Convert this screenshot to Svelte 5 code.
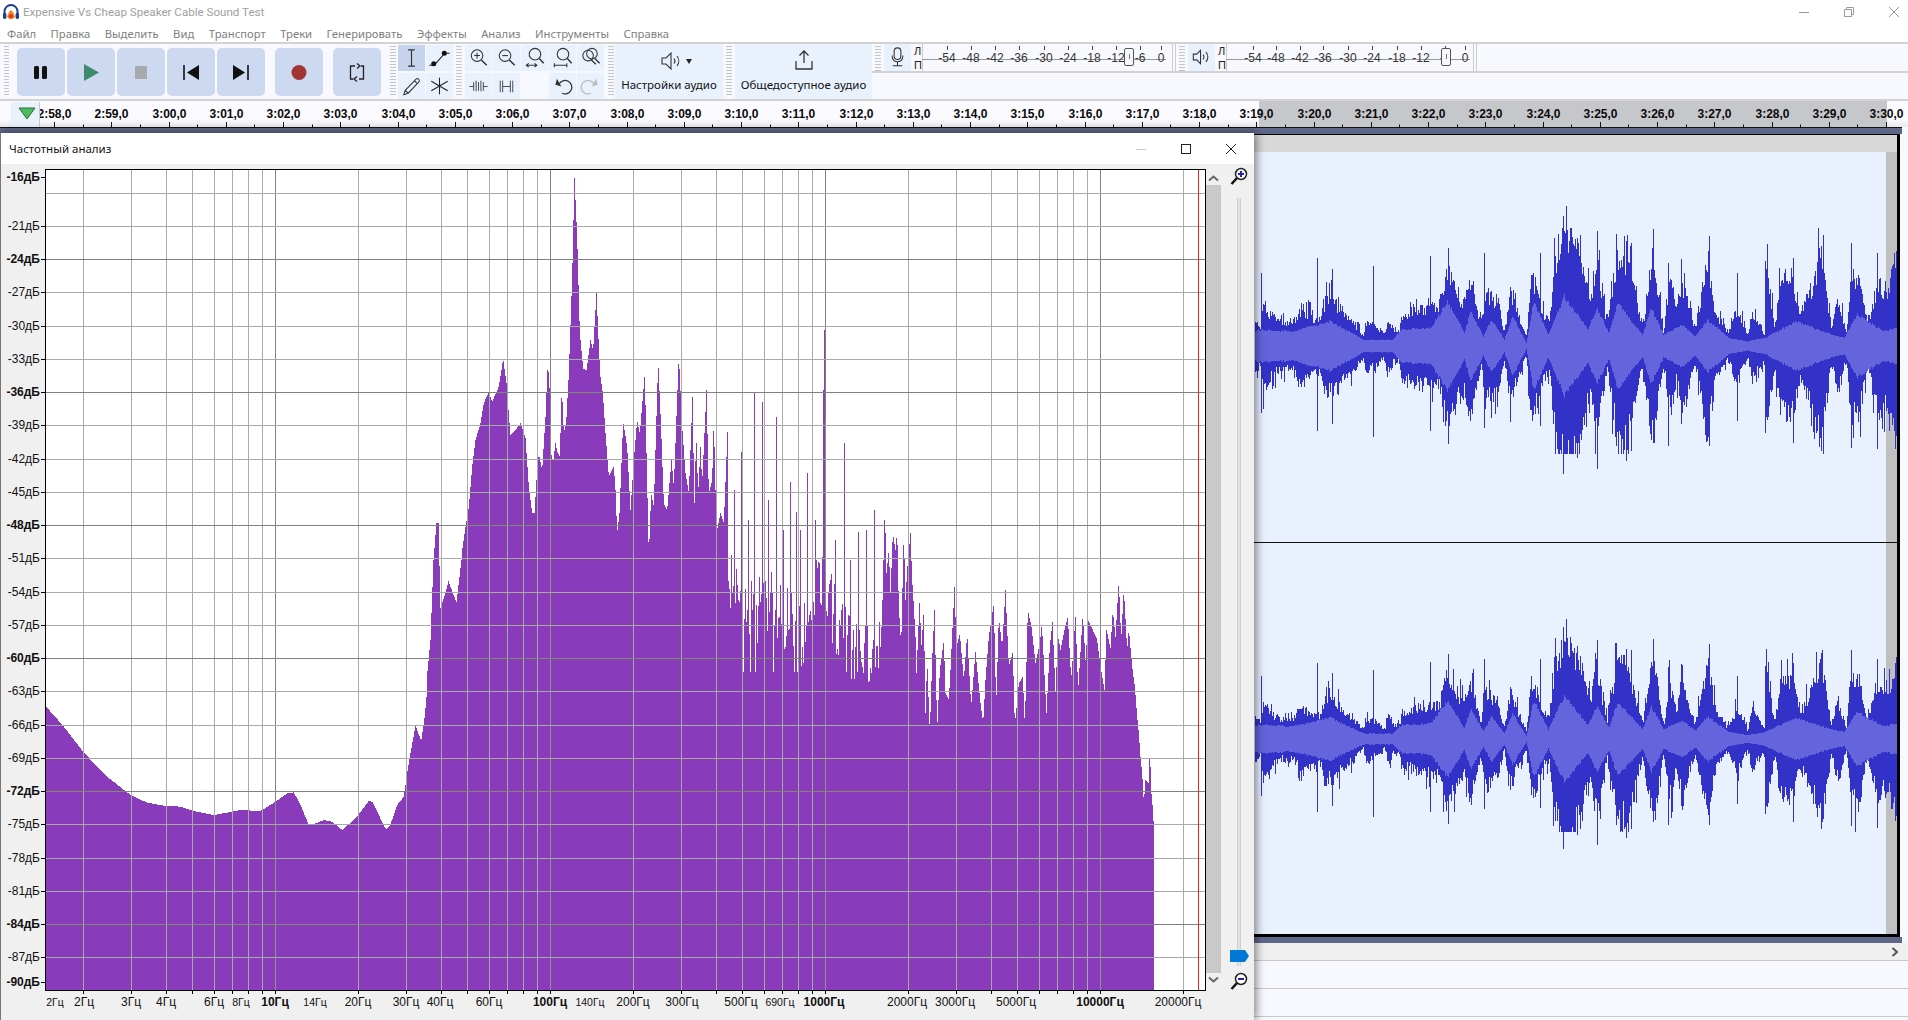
<script>
  const menus = ["Файл", "Правка", "Выделить", "Вид", "Транспорт", "Треки", "Генерировать", "Эффекты", "Анализ", "Инструменты", "Справка"];

  function rng(seed) {
    let a = seed;
    return () => {
      a = (a + 0x6d2b79f5) | 0;
      let t = Math.imul(a ^ (a >>> 15), 1 | a);
      t = (t + Math.imul(t ^ (t >>> 7), 61 | t)) ^ t;
      return ((t ^ (t >>> 14)) >>> 0) / 4294967296;
    };
  }

  function interp(pts, x) {
    if (x <= pts[0][0]) return pts[0][1];
    for (let i = 1; i < pts.length; i++) {
      if (x <= pts[i][0]) {
        const [x0, y0] = pts[i - 1];
        const [x1, y1] = pts[i];
        return y0 + ((y1 - y0) * (x - x0)) / (x1 - x0 || 1);
      }
    }
    return pts[pts.length - 1][1];
  }

  // ruler
  const rulerTicks = [];
  for (let i = 0; i <= 32; i++) {
    const s = 178 + i;
    const x = 54 + i * 57.25;
    const label = `${Math.floor(s / 60)}:${String(s % 60).padStart(2, "0")},0`;
    rulerTicks.push({ x: Math.round(x) + 0.5, half: Math.round(x + 28.6) + 0.5, label });
  }

  // meters
  const dbLabels = [-54, -48, -42, -36, -30, -24, -18, -12, -6, 0];
  const inMeter = { x0: 911, w: 259, div: 922, end: 1166, thumb: 1129, xs: [947, 971, 995, 1019, 1044, 1068, 1092, 1116, 1140, 1161] };
  const outMeter = { x0: 1215, w: 256, div: 1226, end: 1470, thumb: 1446, xs: [1253, 1276, 1300, 1323, 1348, 1372, 1397, 1421, 1445, 1465] };

  // spectrum: top edge traced per section from the plot
  const fromZoom = (ox, oy, s, list) => list.map(([x, y]) => [ox + x / s, oy + y / s]);
  const lowEnd = fromZoom(30, 680, 3, [[47,80],[100,140],[160,218],[230,290],[300,345],[350,368],[400,377],[450,380],[490,393],[550,405],[600,396],[630,390],[690,393],[735,365],[770,340],[790,337],[810,375],[835,435],[850,432],[880,420],[905,425],[935,450],[975,415],[1015,363],[1025,365],[1045,405],[1060,438],[1068,447],[1080,433],[1100,375],[1120,350],[1130,280],[1140,220],[1155,137],[1172,183],[1182,115],[1190,30]]);
  const risePts = [[426,681],[430,640],[433,560],[436,523],[438,523],[440,608],[444,596],[448,581],[452,592],[456,602],[461,560]];
  const midEnd = fromZoom(400, 160, 3, [[185,1170],[195,1100],[205,1040],[215,920],[225,840],[240,790],[250,730],[265,695],[275,725],[295,680],[308,597],[318,670],[324,750],[330,825],[345,810],[360,790],[375,835],[385,980],[395,1060],[402,1060],[408,960],[415,880],[425,930],[435,770],[442,605],[448,700],[452,880],[458,905],[465,850],[472,880],[478,890],[484,680],[490,820],[497,790],[505,640],[515,350],[522,55],[530,230],[538,520],[548,625],[558,630],[570,540],[578,570],[588,400],[595,560],[600,650],[607,700],[615,820],[625,950],[640,920],[645,990],[650,1120],[657,1060],[668,785],[680,860],[690,1050],[700,900],[710,780],[718,820],[733,640],[738,880],[745,1190],[752,1000],[760,1040],[773,600],[782,810],[790,1030],[800,1050],[813,900],[820,980],[835,585],[845,800],[855,940],[865,1000],[877,685],[881,1070],[887,820],[893,1000],[900,860],[905,970],[918,690],[925,1000],[935,960],[940,775],[948,1120],[960,1060],[970,1090],[982,790]]);
  const highEnd = fromZoom(880, 440, 3, [[0,620],[5,520],[13,200],[18,400],[25,330],[30,460],[37,280],[45,330],[50,270],[55,500],[62,620],[70,270],[75,480],[80,390],[90,280],[95,420],[100,500],[105,590],[108,700],[118,465],[122,630],[130,510],[135,820],[140,660],[148,880],[155,660],[162,510],[170,870],[178,690],[190,600],[195,760],[205,780],[210,690],[222,440],[228,620],[238,580],[250,720],[260,580],[272,800],[285,635],[300,790],[308,850],[315,720],[325,590],[340,490],[347,800],[355,530],[365,620],[375,450],[385,680],[397,635],[403,855],[415,730],[427,710],[433,860],[442,510],[453,560],[465,670],[478,610],[484,550],[498,820],[508,620],[516,545],[525,755],[532,585],[540,630],[552,570],[562,530],[572,720],[585,530],[593,750],[607,520],[615,660],[623,540],[637,570],[650,600],[660,680],[673,755],[677,565],[690,625],[697,510],[705,590],[715,420],[722,600],[730,445],[740,630],[745,565],[755,680],[763,740],[770,830],[775,880],[780,950],[785,1000],[790,1090],[795,1020],[805,1030],[808,920],[812,1040],[815,1105],[818,1075],[820,1210],[822,1260]]);
  const upperPts = [...lowEnd, ...risePts, ...midEnd];
  const midBase = [[728,570],[750,600],[770,595],[790,610],[805,625],[820,570],[840,620],[860,645],[880,640]];
  const midSpikes = [[741,452],[754,392],[762,402],[776,417],[790,482],[796,512],[807,473],[812,480],[824,330],[823,390],[825,420],[844,443],[858,532],[734,490],[748,520],[768,500],[783,530],[800,530],[815,520],[835,540],[850,560],[866,530],[874,510]];

  const plot = { left: 45, right: 1205, top: 169, bottom: 990 };
  const r1 = rng(11);
  let specPath = `M${plot.left} ${plot.bottom}`;
  for (let x = plot.left; x < 1154; x++) {
    let y;
    if (x < 728) y = interp(upperPts, x);
    else if (x < 880) {
      const b = interp(midBase, x);
      y = b + (r1() - 0.35) * 70;
      if (r1() < 0.08) y = Math.max(y, 672);
      const s = midSpikes.find((p) => p[0] === x);
      if (s) y = s[1];
    } else y = interp(highEnd, x);
    specPath += `V${y.toFixed(0)}H${x + 1}`;
  }
  specPath += `V${plot.bottom}Z`;

  const dbY = (db) => 226 + (-21 - db) * 11.08;
  const hLines = [];
  for (let db = -18; db >= -87; db -= 3) hLines.push({ y: Math.round(dbY(db)) + 0.5, dark: db % 12 === 0 });
  const dbAxis = [{ t: "-16дБ", y: 177, b: true }, { t: "-90дБ", y: 982, b: true }];
  for (let db = -21; db >= -87; db -= 3) dbAxis.push({ t: `${db}дБ`, y: Math.round(dbY(db)), b: db % 12 === 0 });

  const fx = (f) => Math.round(275 * Math.log10(f)) + 0.5;
  const freqs = [];
  for (const m of [1, 10, 100, 1000]) for (let k = m === 1 ? 2 : 1; k < 10; k++) freqs.push(k * m);
  freqs.push(10000, 20000);
  const vLines = freqs.map((f) => ({ x: fx(f), dark: f === 10 || f === 100 || f === 1000 || f === 10000 }));
  const freqAxis = [
    ["2Гц", 55, "s"], ["2Гц", 84], ["3Гц", 131], ["4Гц", 166], ["6Гц", 214], ["8Гц", 241, "s"], ["10Гц", 275, "b"],
    ["14Гц", 315, "s"], ["20Гц", 358], ["30Гц", 406], ["40Гц", 440], ["60Гц", 489], ["100Гц", 550, "b"], ["140Гц", 590, "s"],
    ["200Гц", 633], ["300Гц", 682], ["500Гц", 741], ["690Гц", 780, "s"], ["1000Гц", 824, "b"], ["2000Гц", 907],
    ["3000Гц", 955], ["5000Гц", 1016], ["10000Гц", 1100, "b"], ["20000Гц", 1178]
  ];

  // waveform envelopes, traced in zoomed units around the channel centre
  const peakEnv = [[12,410],[25,420],[30,350],[50,390],[70,410],[100,410],[125,370],[150,400],[165,400],[180,340],[200,350],[230,390],[270,445],[275,410],[300,420],[320,445],[330,400],[340,430],[356,435],[360,390],[400,370],[450,360],[470,250],[490,320],[510,350],[525,280],[550,420],[560,320],[590,350],[605,440],[620,320],[650,430],[658,450],[670,270],[700,390],[712,400],[730,200],[750,140],[770,170],[790,230],[810,350],[825,220],[850,420],[875,200],[900,230],[935,420],[960,200],[985,440],[1000,280],[1015,380],[1030,300],[1060,430],[1090,220],[1110,390],[1140,440],[1160,370],[1185,450],[1195,380],[1225,440],[1228,240],[1250,420],[1262,290],[1290,270],[1310,390],[1340,300],[1360,200],[1385,430],[1400,340],[1420,440],[1430,280],[1450,270],[1470,420],[1495,290],[1520,320],[1540,200]];
  const rmsEnv = [[12,40],[20,45],[100,40],[190,70],[270,15],[340,15],[360,45],[430,50],[470,130],[510,35],[525,100],[555,25],[575,75],[605,15],[625,85],[658,5],[675,130],[710,30],[748,145],[805,45],[825,110],[855,35],[875,125],[935,30],[955,110],[985,30],[1030,60],[1060,25],[1090,75],[1140,20],[1185,10],[1225,20],[1300,70],[1385,30],[1415,20],[1445,90],[1510,40],[1540,50]];
  const waveSpikes = [[27,245,665],[160,200,720],[196,235,700],[294,225,737],[428,195,720],[473,170,760],[558,185,710],[692,185,705],[745,75,850],[752,45,790],[762,110,790],[780,140,800],[828,120,835],[873,130,765],[895,150,810],[907,155,780],[961,115,755],[997,215,765],[1028,205,700],[1093,135,765],[1161,245,690],[1228,210,725],[1295,200,755],[1360,165,780],[1433,155,770],[1495,185,775],[1540,180,735]];

  function buildWave(cy, scale, seed) {
    const r = rng(seed);
    let peak = "";
    let rms = "";
    for (let x = 1255; x < 1897; x++) {
      const zx = (x - 1250) * 2.383;
      const amp = (((465 - interp(peakEnv, zx)) / 3) + 5) * scale;
      let up = amp * (0.8 + 0.36 * r());
      let dn = amp * (0.8 + 0.42 * r());
      if (r() < 0.16) up *= 1.3;
      if (r() < 0.16) dn *= 1.3;
      // keep random tops inside what the traced spikes reach
      up = Math.min(up, 118 * scale);
      dn = Math.min(dn, 108 * scale);
      const sp = waveSpikes.find((s) => Math.abs(s[0] - zx) < 1.2);
      if (sp) {
        up = ((465 - sp[1]) / 3) * scale;
        dn = ((sp[2] - 465) / 3) * scale;
      }
      peak += `M${x}.5 ${(cy - up).toFixed(0)}V${(cy + dn).toFixed(0)}`;
      const ra = ((interp(rmsEnv, zx) + 4) / 3) * scale * (0.94 + 0.12 * r());
      rms += `M${x}.5 ${(cy - ra).toFixed(0)}V${(cy + ra).toFixed(0)}`;
    }
    return { peak, rms };
  }
  const waves = [buildWave(345, 1, 5), buildWave(738, 0.86, 9)];
</script>

<div class="app">
  <header class="titlebar">
    <svg class="logo" viewBox="0 0 18 18" width="18" height="18">
      <path d="M2.5 11V8.5a6.5 6.5 0 0 1 13 0V11" fill="none" stroke="#1b3f94" stroke-width="2" />
      <rect x="1" y="10" width="3.4" height="6" rx="1.4" fill="#1b3f94" />
      <rect x="13.6" y="10" width="3.4" height="6" rx="1.4" fill="#1b3f94" />
      <path d="M5 13.5 7 9l2-2 2 2 2 4.5-2 2.5H7Z" fill="#f08a1c" />
      <path d="M6.5 13.2 9 10.5l2.5 2.7L9 15.5Z" fill="#e4301c" />
    </svg>
    <span class="doc-title">Expensive Vs Cheap Speaker Cable Sound Test</span>
    <div class="win-btns">
      <svg viewBox="0 0 12 12" width="12" height="12"><path d="M1 6.5h10" stroke="#9a9a9a" /></svg>
      <svg viewBox="0 0 12 12" width="12" height="12"><path d="M1.5 3.5h7v7h-7ZM3.5 3.5v-2h7v7h-2" fill="none" stroke="#9a9a9a" /></svg>
      <svg viewBox="0 0 12 12" width="12" height="12"><path d="M1 1l10 10M11 1 1 11" stroke="#9a9a9a" /></svg>
    </div>
  </header>

  <nav class="menubar">
    {#each menus as m}<span>{m}</span>{/each}
  </nav>

  <section class="toolbars">
    <i class="grip first"></i>
    <div class="transport">
      <div class="tbtn">
        <svg viewBox="0 0 48 48"><rect x="17" y="18" width="5" height="13" rx="1.5" fill="#111" /><rect x="25" y="18" width="5" height="13" rx="1.5" fill="#111" /></svg>
      </div>
      <div class="tbtn">
        <svg viewBox="0 0 48 48"><path d="M17 16 32 24.500 17 33Z" fill="#3f8a6c" /></svg>
      </div>
      <div class="tbtn">
        <svg viewBox="0 0 48 48"><rect x="18" y="18" width="12" height="13" fill="#a8a9ad" /></svg>
      </div>
      <div class="tbtn">
        <svg viewBox="0 0 48 48"><path d="M17 17v15" stroke="#111" stroke-width="1.600" /><path d="M32 17v15L20 24.500Z" fill="#111" /></svg>
      </div>
      <div class="tbtn">
        <svg viewBox="0 0 48 48"><path d="M31 17v15" stroke="#111" stroke-width="1.600" /><path d="M16 17v15l12-7.500Z" fill="#111" /></svg>
      </div>
      <div class="tbtn gap">
        <svg viewBox="0 0 48 48"><circle cx="24" cy="24.500" r="7.500" fill="#a33434" /></svg>
      </div>
      <div class="tbtn gap">
        <svg viewBox="0 0 48 48"><path d="M22 18h-4.500v13H20M26 31h4.500V18H28M24 15.500l3 2.500-3 2.500M24 28.500 21 31l3 2.500" fill="none" stroke="#222" stroke-width="1.300" /></svg>
      </div>
    </div>
    <i class="grip g-tools"></i>
    <div class="tools two">
      <div class="tool active">
        <svg viewBox="0 0 27 27"><path d="M10 5h7M13.500 5v17M10 22h7" fill="none" stroke="#333" stroke-width="1.200" /></svg>
      </div>
      <div class="tool">
        <svg viewBox="0 0 27 27"><path d="M3 21h5L19 8.500h5" fill="none" stroke="#222" stroke-width="1.100" /><circle cx="7.500" cy="19.500" r="2.600" fill="#111" /><circle cx="18.500" cy="8.500" r="2.600" fill="#111" /></svg>
      </div>
      <div class="tool">
        <svg viewBox="0 0 27 27"><path d="M7 18 18 6.500a2 2 0 0 1 3 3L10 21l-4.500 1.500ZM16.500 8l3 3M7 18l3 3" fill="none" stroke="#333" stroke-width="1.100" /></svg>
      </div>
      <div class="tool">
        <svg viewBox="0 0 27 27"><path d="M13.500 5v17M5 8.500l17 10M22 8.500l-17 10" stroke="#222" stroke-width="1.100" /></svg>
      </div>
    </div>
    <i class="grip g-zoom"></i>
    <div class="tools five">
      <div class="tool"><svg viewBox="0 0 27 27"><g fill="none" stroke="#333" stroke-width="1.100"><circle cx="12" cy="11" r="6" /><path d="M12 8v6M9 11h6" /><path d="M16.500 15.500 22 21" stroke-width="1.500" /></g></svg></div>
      <div class="tool"><svg viewBox="0 0 27 27"><g fill="none" stroke="#333" stroke-width="1.100"><circle cx="12" cy="11" r="6" /><path d="M9 11h6" /><path d="M16.500 15.500 22 21" stroke-width="1.500" /></g></svg></div>
      <div class="tool"><svg viewBox="0 0 27 27"><g fill="none" stroke="#333" stroke-width="1.100"><circle cx="14" cy="9.500" r="6" /><path d="M18.500 14 23 19" stroke-width="1.500" /><path d="M5 21h11M7.500 19 5 21l2.500 2M13.500 19l2.500 2-2.500 2" /></g></svg></div>
      <div class="tool"><svg viewBox="0 0 27 27"><g fill="none" stroke="#333" stroke-width="1.100"><circle cx="14" cy="9.500" r="6" /><path d="M18.500 14 23 19" stroke-width="1.500" /><path d="M5 21h13M5 19v4M18 19v4" /></g></svg></div>
      <div class="tool"><svg viewBox="0 0 27 27"><g fill="none" stroke="#333" stroke-width="1.100"><circle cx="11" cy="11" r="5.500" /><circle cx="15" cy="9" r="5.500" /><path d="M18 14l5 5M14 15l5 5" stroke-width="1.300" /></g></svg></div>
      <div class="tool"><svg viewBox="0 0 27 27"><path d="M4 14h4.500M8.500 9.500v9M11 8v11M13.500 9.500v9M16 8v11M18.500 9.500v9M18.500 14H23" fill="none" stroke="#333" stroke-width=".9" /></svg></div>
      <div class="tool"><svg viewBox="0 0 27 27"><path d="M7 8v12M9.500 8v12M9.500 14h8M17.500 8v12M20 8v12" fill="none" stroke="#333" stroke-width=".9" /></svg></div>
      <div class="tool blank"></div>
      <div class="tool"><svg viewBox="0 0 27 27"><path d="M10 11.500A7 7 0 1 1 13 21" fill="none" stroke="#333" stroke-width="1.300" /><path d="M6.500 6.500v6.500h6.500Z" fill="#333" transform="rotate(15 9 11)" /></svg></div>
      <div class="tool"><svg viewBox="0 0 27 27"><path d="M17 11.500A7 7 0 1 0 14 21" fill="none" stroke="#bbb" stroke-width="1.300" /><path d="M20.500 6.500v6.500H14Z" fill="#bbb" transform="rotate(-15 18 11)" /></svg></div>
    </div>
    <i class="grip g-audio"></i>
    <div class="wide audio">
      <div class="wide-icon">
        <svg viewBox="0 0 36 24" width="36" height="24"><path d="M3 9h4l5-5v16l-5-5H3Z" fill="none" stroke="#333" stroke-width="1.100" /><path d="M15 9.500a4 4 0 0 1 0 5M18 7a8 8 0 0 1 0 10" fill="none" stroke="#333" stroke-width="1.100" /><path d="M27 10h6l-3 5Z" fill="#222" /></svg>
      </div>
      <span>Настройки аудио</span>
    </div>
    <i class="grip g-share"></i>
    <div class="wide share">
      <div class="wide-icon">
        <svg viewBox="0 0 24 24" width="24" height="24"><path d="M12 15V3M7.500 7.500 12 3l4.500 4.500M4 13v8h16v-8" fill="none" stroke="#333" stroke-width="1.300" /></svg>
      </div>
      <span>Общедоступное аудио</span>
    </div>
    <div class="meters">
      <i class="grip g-m1"></i>
      <div class="tool mbtn">
        <svg viewBox="0 0 27 27"><rect x="10" y="4" width="7" height="12" rx="3.500" fill="none" stroke="#333" stroke-width="1.100" /><path d="M8 12v1a5.500 5.500 0 0 0 11 0v-1M13.500 19v3M8.500 22.500h10" fill="none" stroke="#333" stroke-width="1.100" /></svg>
      </div>
      {#each [inMeter] as m}
        <svg class="meter" width={m.w} height="27" viewBox="{m.x0} 44 {m.w} 27">
          <text class="lr" x={m.x0 + 3} y="55">Л</text>
          <text class="lr" x={m.x0 + 3} y="69">П</text>
          <path d="M{m.div + 0.5} 44v27" stroke="#ccc" />
          <path d="M{m.div} 59.500H{m.end}" stroke="#999" />
          {#each m.xs as x, i}
            <path d="M{x + 0.5} 46v4" stroke="#444" />
            <text class="mt" {x} y="62">{dbLabels[i]}</text>
          {/each}
          <rect x={m.thumb - 4.5} y="48.500" width="9" height="17" rx="1.500" fill="#f6f7fb" stroke="#555" />
          <path d="M{m.thumb + 0.5} 54v5" stroke="#777" />
        </svg>
      {/each}
      <i class="sep"></i>
      <i class="grip g-m2"></i>
      <div class="tool mbtn">
        <svg viewBox="0 0 27 27"><path d="M5 10.500h3.500l4-4v14l-4-4H5Z" fill="none" stroke="#333" stroke-width="1.100" /><path d="M15 11a3.500 3.500 0 0 1 0 5M18 8.500a7 7 0 0 1 0 10" fill="none" stroke="#333" stroke-width="1.100" /></svg>
      </div>
      {#each [outMeter] as m}
        <svg class="meter" width={m.w} height="27" viewBox="{m.x0} 44 {m.w} 27">
          <text class="lr" x={m.x0 + 3} y="55">Л</text>
          <text class="lr" x={m.x0 + 3} y="69">П</text>
          <path d="M{m.div + 0.5} 44v27" stroke="#ccc" />
          <path d="M{m.div} 59.500H{m.end}" stroke="#999" />
          {#each m.xs as x, i}
            <path d="M{x + 0.5} 46v4" stroke="#444" />
            <text class="mt" {x} y="62">{dbLabels[i]}</text>
          {/each}
          <rect x={m.thumb - 4.5} y="48.500" width="9" height="17" rx="1.500" fill="#f6f7fb" stroke="#555" />
          <path d="M{m.thumb + 0.5} 54v5" stroke="#777" />
        </svg>
      {/each}
      <i class="sep"></i>
    </div>
  </section>

  <div class="ruler">
    <svg class="ruler-svg" width="1908" height="28" viewBox="0 99 1908 28">
      <rect x="1259" y="99" width="628" height="28" fill="#c6c7cb" />
      {#each rulerTicks as t}
        <text class="rt" x={t.x} y="118">{t.label}</text>
        <path d="M{t.x} 122v5" stroke="#111" />
        <path d="M{t.half} 124.500v2.500" stroke="#111" />
      {/each}
    </svg>
    <div class="pin">
      <svg viewBox="0 0 28 25" width="28" height="25"><path d="M8 6h16l-8 11Z" fill="#4dbb5f" stroke="#2c6b3a" /></svg>
    </div>
  </div>

  <div class="workspace">
    <div class="band top"></div>
    <div class="tracks">
      <div class="track-head"></div>
      <div class="track-strip"></div>
      <svg class="waves" width="1908" height="803" viewBox="0 134 1908 803">
        <path d="M1254 541.500H1897" stroke="#111" />
        {#each waves as w}
          <path d={w.peak} stroke="#3232c8" shape-rendering="crispEdges" />
          <path d={w.rms} stroke="#6464dc" shape-rendering="crispEdges" />
        {/each}
      </svg>
    </div>
    <div class="band low"></div>
    <div class="hscroll">
      <svg viewBox="0 0 10 12" width="10" height="12"><path d="M2.500 2 7 6l-4.500 4" fill="none" stroke="#555" stroke-width="2" /></svg>
    </div>
    <div class="lane"></div>
    <div class="lane"></div>

    <div class="dialog">
      <div class="dlg-title">
        <span>Частотный анализ</span>
        <div class="dlg-btns">
          <svg viewBox="0 0 12 12" width="12" height="12"><path d="M1 6.500h10" stroke="#c8c8c8" /></svg>
          <svg viewBox="0 0 12 12" width="12" height="12"><rect x="1.500" y="1.500" width="9" height="9" fill="none" stroke="#222" /></svg>
          <svg viewBox="0 0 12 12" width="12" height="12"><path d="M1 1l10 10M11 1 1 11" stroke="#222" /></svg>
        </div>
      </div>
      <div class="dlg-body">
        <svg class="chart" width="1206" height="856" viewBox="0 164 1206 856">
          <defs><clipPath id="spec-clip"><path d={specPath} /></clipPath></defs>
          <rect x={plot.left} y={plot.top} width={plot.right - plot.left} height={plot.bottom - plot.top} fill="#fff" />
          <path d={specPath} fill="#8a3bbb" />
          <g shape-rendering="crispEdges">
            {#each vLines as l}
              <path d="M{l.x} 170V990" stroke={l.dark ? "#808080" : "#aaaaaa"} />
            {/each}
            {#each hLines as l}
              <path d="M45 {l.y}H1205" stroke={l.dark ? "#808080" : "#aaaaaa"} />
            {/each}
            <g clip-path="url(#spec-clip)">
              {#each vLines as l}
                <path d="M{l.x} 170V990" stroke={l.dark ? "#8c9480" : "#a3aca0"} />
              {/each}
              {#each hLines as l}
                <path d="M45 {l.y}H1205" stroke={l.dark ? "#7d8a6c" : "#a3aca0"} />
              {/each}
            </g>
            <path d="M1198.500 170V990" stroke="#f02020" />
            <path d="M45 169.500H1205.500V990.500H45.500V169" fill="none" stroke="#000" />
            {#each dbAxis as d}
              <path d="M41 {d.y}.500H45" stroke="#000" />
            {/each}
            {#each vLines as l}
              <path d="M{l.x} 990V994" stroke="#000" />
            {/each}
          </g>
          {#each dbAxis as d}
            <text class="ylab" class:b={d.b} x="40" y={d.y + 4}>{d.t}</text>
          {/each}
          {#each freqAxis as [t, x, kind]}
            <text class="xlab" class:b={kind === "b"} class:s={kind === "s"} {x} y="1006">{t}</text>
          {/each}
        </svg>
        <div class="vscroll">
          <svg viewBox="0 0 15 8" width="15" height="8"><path d="M3 6.500l4.500-4 4.500 4" fill="none" stroke="#666" stroke-width="2" /></svg>
          <div class="vthumb"></div>
          <svg viewBox="0 0 15 8" width="15" height="8"><path d="M3 1.500l4.500 4 4.500-4" fill="none" stroke="#666" stroke-width="2" /></svg>
        </div>
        <div class="zoomcol">
          <svg class="mag" viewBox="0 0 20 20" width="20" height="20"><circle cx="12" cy="8" r="5.500" fill="#fff" stroke="#222" stroke-width="1.500" /><path d="M9 8h6M12 5v6" stroke="#2222aa" stroke-width="2" /><path d="M8 12 2.500 18" stroke="#111" stroke-width="2.500" /></svg>
          <div class="ztrack"></div>
          <div class="zthumb">
            <svg viewBox="0 0 19 12" width="19" height="12"><path d="M0 0h15l4 6-4 6H0Z" fill="#0078d7" /></svg>
          </div>
          <div class="ztrack tail"></div>
          <svg class="mag" viewBox="0 0 20 20" width="20" height="20"><circle cx="12" cy="8" r="5.500" fill="#fff" stroke="#222" stroke-width="1.500" /><path d="M9 8h6" stroke="#2222aa" stroke-width="2" /><path d="M8 12 2.500 18" stroke="#111" stroke-width="2.500" /></svg>
        </div>
      </div>
    </div>
  </div>
</div>

<style>
  :global(body) {
    margin: 0;
    background: #f8f9fe;
    overflow: hidden;
  }
  .app {
    width: 1908px;
    height: 1020px;
    display: flex;
    flex-direction: column;
    overflow: hidden;
    font-family: "Noto Sans", "Liberation Sans", sans-serif;
  }
  .titlebar {
    height: 24px;
    background: #fff;
    display: flex;
    align-items: center;
    padding-left: 2px;
    gap: 3px;
  }
  .doc-title {
    font-family: Roboto, "Liberation Sans", sans-serif;
    font-size: 11.6px;
    color: #a0a0a0;
  }
  .win-btns {
    margin-left: auto;
    display: flex;
    gap: 33px;
    padding-right: 8px;
  }
  .menubar {
    height: 18px;
    background: #fff;
    display: flex;
    align-items: center;
    gap: 14.5px;
    padding-left: 7px;
    font-size: 11.25px;
    color: #808080;
  }
  .toolbars {
    height: 55px;
    box-sizing: content-box;
    display: flex;
    background: #f8f9fe;
    border-top: 2px solid #d2d2d2;
    border-bottom: 2px solid #d2d2d2;
  }
  .grip {
    display: block;
    width: 6px;
    height: 51px;
    margin-top: 2px;
    flex: none;
    background: repeating-linear-gradient(#c4c4c4 0 1px, transparent 1px 3px);
  }
  .grip.first { margin-left: 4px; width: 5px; }
  .transport {
    display: flex;
    gap: 2px;
    margin-left: 8px;
    align-items: center;
    height: 55px;
  }
  .tbtn {
    width: 48px;
    height: 48px;
    background: #cdd9f0;
    border-radius: 5px;
  }
  .tbtn.gap { margin-left: 8px; }
  .tbtn svg { display: block; width: 48px; height: 48px; }
  .g-tools { margin-left: 9px; }
  .g-zoom { margin-left: 3px; }
  .g-audio { margin-left: 4px; }
  .g-share { margin-left: 3px; }
  .tools {
    display: grid;
    grid-auto-rows: 26px;
    column-gap: 1px;
    row-gap: 2px;
    margin-top: 1px;
  }
  .tools.two { grid-template-columns: repeat(2, 27px); margin-left: 2px; }
  .tools.five { grid-template-columns: repeat(5, 27px); margin-left: 3px; }
  .tool {
    background: #e9f1fd;
    height: 26px;
    width: 27px;
  }
  .tool.active { background: #c6d3ed; }
  .tool.blank { background: transparent; }
  .tool svg { display: block; width: 27px; height: 26px; }
  .wide {
    background: #e9f1fd;
    display: flex;
    flex-direction: column;
    align-items: center;
    font-size: 11.5px;
    color: #111;
    white-space: nowrap;
  }
  .wide.audio { width: 108px; margin-left: 1px; }
  .wide.share { width: 137px; margin-left: 3px; }
  .wide-icon { height: 32px; padding-top: 4px; box-sizing: border-box; }
  .wide span { line-height: 16px; padding-top: 1px; }
  .wide.audio .wide-icon { padding-left: 16px; padding-top: 5px; }
  .meters {
    flex: 1;
    height: 27px;
    display: flex;
    border-bottom: 2px solid #d2d2d2;
  }
  .meters .grip { height: 25px; }
  .g-m1 { margin-left: 3px; }
  .g-m2 { margin-left: 3px; }
  .mbtn { margin-left: 3px; height: 27px; flex: none; }
  .meter { display: block; flex: none; }
  .sep {
    display: block;
    width: 4px;
    height: 27px;
    margin-left: 2px;
    border-left: 1px solid #ccc;
    border-right: 1px solid #ccc;
    box-sizing: border-box;
    flex: none;
  }
  .lr { font: 11px "Liberation Sans", sans-serif; fill: #222; }
  .mt { font: 12px "Liberation Sans", sans-serif; fill: #333; text-anchor: middle; }
  .ruler {
    position: relative;
    height: 26px;
    overflow: hidden;
    background: linear-gradient(#fbfbff 70%, #e8e8ee);
  }
  .ruler-svg { position: absolute; left: 0; top: -2px; }
  .rt {
    font: bold 12px "Liberation Sans", sans-serif;
    fill: #0a0a0a;
    text-anchor: middle;
  }
  .pin {
    position: absolute;
    left: 11px;
    top: 1px;
    width: 28px;
    height: 25px;
    background: #e9f1fd;
    border-right: 1px solid #c8c8c8;
    border-bottom: 1px solid #c8c8c8;
    box-sizing: content-box;
  }
  .pin svg { display: block; }
  .workspace {
    position: relative;
    flex: 1;
    display: flex;
    flex-direction: column;
    min-height: 0;
  }
  .band {
    height: 7px;
    background: #5f6788;
    border-top: 1px solid #111;
    box-sizing: border-box;
    flex: none;
  }
  .band.top { margin-right: 6px; }
  .band.low {
    height: 6px;
    border-top: none;
    margin-right: 6px;
  }
  .tracks {
    position: relative;
    height: 803px;
    flex: none;
    margin-right: 8px;
    background: #e9f1fe;
    border-top: 1px solid #000;
    border-bottom: 3px solid #000;
    border-right: 3px solid #000;
    overflow: hidden;
    box-sizing: border-box;
  }
  .track-head { height: 17px; background: #d8d8d8; }
  .track-strip {
    position: absolute;
    right: 0;
    top: 17px;
    bottom: 0;
    width: 11px;
    background: #c0c0c0;
  }
  .waves { position: absolute; left: 0; top: 0; }
  .hscroll {
    height: 17px;
    flex: none;
    background: #f0f0f0;
    border-bottom: 1px solid #c8c8c8;
    display: flex;
    justify-content: flex-end;
    align-items: center;
    padding-right: 8px;
  }
  .lane {
    height: 27px;
    flex: none;
    background: #f8f9fe;
    border-bottom: 1px solid #c8c8c8;
  }
  .dialog {
    position: absolute;
    left: 0;
    top: 6px;
    width: 1254px;
    height: 887px;
    background: #f0f0f0;
    display: flex;
    flex-direction: column;
    box-shadow: 2px 0 9px rgba(0, 0, 0, 0.5);
    border-left: 1px solid #777;
    box-sizing: border-box;
  }
  .dlg-title {
    height: 31px;
    flex: none;
    background: #fff;
    display: flex;
    align-items: center;
    padding-left: 8px;
    font-size: 11.5px;
    color: #111;
  }
  .dlg-btns {
    margin-left: auto;
    display: flex;
    gap: 33px;
    padding-right: 17px;
  }
  .dlg-body {
    flex: 1;
    display: flex;
    margin-left: -1px;
    min-height: 0;
  }
  .chart { display: block; flex: none; }
  .ylab {
    font: 12px "Liberation Sans", sans-serif;
    fill: #111;
    text-anchor: end;
  }
  .xlab {
    font: 12px "Liberation Sans", sans-serif;
    fill: #111;
    text-anchor: middle;
  }
  .b { font-weight: bold; }
  .xlab.s { font-size: 10.5px; }
  .vscroll {
    width: 15px;
    flex: none;
    padding-top: 10px;
    display: flex;
    flex-direction: column;
    gap: 3px;
    height: 823px;
  }
  .vscroll svg { display: block; flex: none; }
  .vthumb {
    background: #c9c9c9;
    height: 788px;
    flex: none;
  }
  .zoomcol {
    flex: 1;
    display: flex;
    flex-direction: column;
    align-items: center;
    padding-top: 2px;
    padding-left: 3px;
  }
  .mag { display: block; flex: none; }
  .ztrack {
    width: 4px;
    height: 752px;
    margin-top: 12px;
    background: #e2e2e2;
    border-left: 1px solid #d0d0d0;
    border-right: 1px solid #d0d0d0;
    box-sizing: border-box;
  }
  .ztrack.tail { height: 4px; margin-top: 0; margin-bottom: 5px; }
  .zthumb { height: 12px; }
  .zthumb svg { display: block; }
</style>
